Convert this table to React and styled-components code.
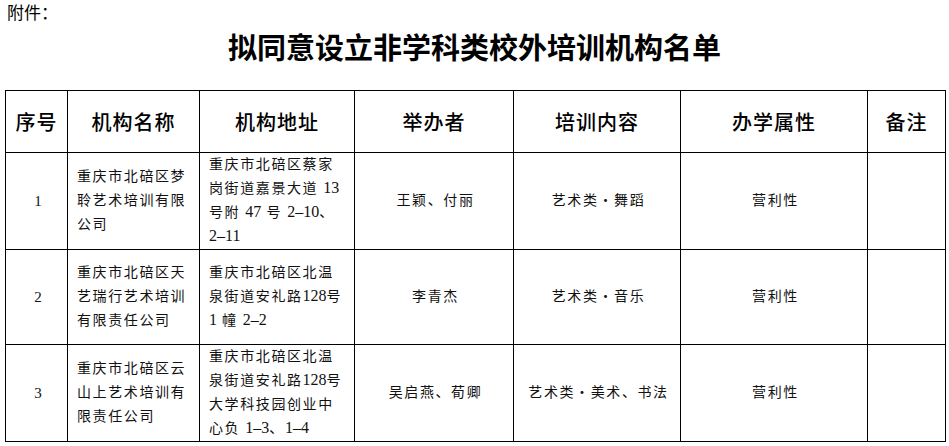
import React from "react";
import styled, { createGlobalStyle } from "styled-components";

const Global = createGlobalStyle`
  html, body { margin: 0; padding: 0; background: #fff; }
  body { font-family: "Noto Sans CJK SC", sans-serif; color: #000; }
`;

const Page = styled.div`
  width: 949px;
  padding: 0 5px;
  box-sizing: border-box;
`;

const Label = styled.div`
  font-size: 17px;
  line-height: 24px;
  padding-left: 2px;
`;

const Title = styled.h1`
  margin: 2px 0 0;
  font-size: 29px;
  line-height: 40px;
  font-weight: 700;
  text-align: center;
  font-family: "Noto Sans CJK SC", serif;
`;

const Table = styled.table`
  margin-top: 24px;
  width: 940px;
  border-collapse: collapse;
  table-layout: fixed;
`;

const Th = styled.th`
  border: 1.5px solid #000;
  font-size: 20px;
  font-weight: 500;
  letter-spacing: 1px;
  text-align: center;
  vertical-align: middle;
  padding: 0;
`;

const Td = styled.td`
  border: 1.5px solid #000;
  padding: 0 6px 0 9px;
  vertical-align: middle;
  text-align: ${(p) => (p.$left ? "left" : "center")};
  font-family: "Liberation Serif", "Noto Sans CJK SC", serif;
  font-size: ${(p) => (p.$num ? "15px" : "14px")};
  line-height: 24px;
  letter-spacing: ${(p) => (p.$num ? "0" : "1.6px")};
  color: #111;
`;

const Line = styled.span`
  display: block;
  white-space: nowrap;
  height: 24px;
`;

const Num = styled.span`
  font-family: "Liberation Serif", serif;
  font-size: 16px;
  line-height: 1;
  letter-spacing: 0;
`;

const HeadRow = styled.tr`
  height: 62px;
`;

const BodyRow = styled.tr`
  height: ${(p) => p.$h}px;
`;

const cols = [62, 132, 155, 159, 167, 187, 78];
const heads = ["序号", "机构名称", "机构地址", "举办者", "培训内容", "办学属性", "备注"];

const rows = [
  {
    h: 97,
    no: "1",
    name: ["重庆市北碚区梦", "聆艺术培训有限", "公司"],
    addr: ["重庆市北碚区蔡家", "岗街道嘉景大道 13", "号附 47 号 2–10、", "2–11"],
    owner: "王颖、付丽",
    content: "艺术类・舞蹈",
    kind: "营利性",
  },
  {
    h: 95,
    no: "2",
    name: ["重庆市北碚区天", "艺瑞行艺术培训", "有限责任公司"],
    addr: ["重庆市北碚区北温", "泉街道安礼路128号", "1 幢 2–2"],
    owner: "李青杰",
    content: "艺术类・音乐",
    kind: "营利性",
  },
  {
    h: 97,
    no: "3",
    name: ["重庆市北碚区云", "山上艺术培训有", "限责任公司"],
    addr: ["重庆市北碚区北温", "泉街道安礼路128号", "大学科技园创业中", "心负 1–3、1–4"],
    owner: "吴启燕、荀卿",
    content: "艺术类・美术、书法",
    kind: "营利性",
  },
];

function Text({ value }) {
  return value
    .split(/([0-9–]+)/)
    .map((part, i) => (/^[0-9–]+$/.test(part) ? <Num key={i}>{part}</Num> : part));
}

export default function App() {
  return (
    <Page>
      <Global />
      <Label>附件：</Label>
      <Title>拟同意设立非学科类校外培训机构名单</Title>
      <Table>
        <colgroup>
          {cols.map((w, i) => (
            <col key={i} style={{ width: w }} />
          ))}
        </colgroup>
        <thead>
          <HeadRow>
            {heads.map((h) => (
              <Th key={h}>{h}</Th>
            ))}
          </HeadRow>
        </thead>
        <tbody>
          {rows.map((r) => (
            <BodyRow key={r.no} $h={r.h}>
              <Td $num>{r.no}</Td>
              <Td $left>
                {r.name.map((l) => (
                  <Line key={l}>{l}</Line>
                ))}
              </Td>
              <Td $left>
                {r.addr.map((l) => (
                  <Line key={l}>
                    <Text value={l} />
                  </Line>
                ))}
              </Td>
              <Td>{r.owner}</Td>
              <Td>{r.content}</Td>
              <Td>{r.kind}</Td>
              <Td />
            </BodyRow>
          ))}
        </tbody>
      </Table>
    </Page>
  );
}
